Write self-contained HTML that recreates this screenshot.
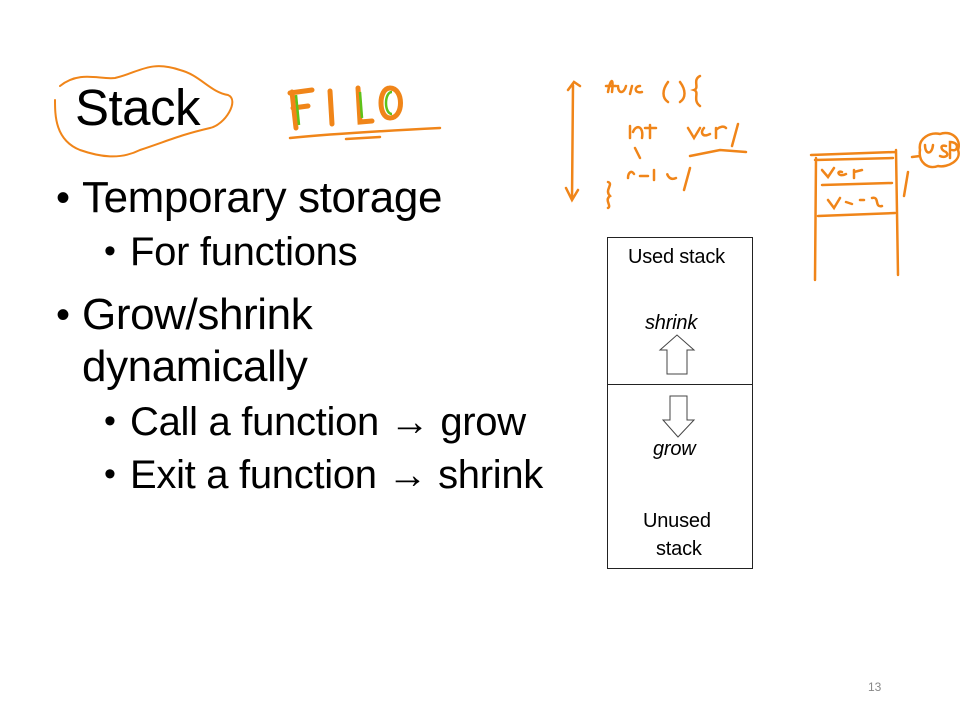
<!DOCTYPE html>
<html><head><meta charset="utf-8"><style>
body{margin:0;width:960px;height:720px;background:#fff;position:relative;overflow:hidden;font-family:"Liberation Sans",sans-serif;color:#000}
.t{position:absolute;white-space:nowrap;line-height:1}
</style></head><body>
<div class="t" style="left:75px;top:82px;font-size:51px;letter-spacing:-0.5px">Stack</div>
<div class="t" style="left:56px;top:178px;font-size:40px">•</div>
<div class="t" style="left:82px;top:176px;font-size:44px;letter-spacing:-0.4px">Temporary storage</div>
<div class="t" style="left:104px;top:234px;font-size:34px">•</div>
<div class="t" style="left:130px;top:232px;font-size:40px;letter-spacing:-0.3px">For functions</div>
<div class="t" style="left:56px;top:295px;font-size:40px">•</div>
<div class="t" style="left:82px;top:293px;font-size:44px;letter-spacing:-0.4px">Grow/shrink</div>
<div class="t" style="left:82px;top:345px;font-size:44px;letter-spacing:-0.4px">dynamically</div>
<div class="t" style="left:104px;top:404px;font-size:34px">•</div>
<div class="t" style="left:130px;top:402px;font-size:40px;letter-spacing:-0.3px">Call a function <b>→</b> grow</div>
<div class="t" style="left:104px;top:457px;font-size:34px">•</div>
<div class="t" style="left:130px;top:455px;font-size:40px;letter-spacing:-0.3px">Exit a function <b>→</b> shrink</div>
<div style="position:absolute;left:607px;top:237px;width:144px;height:330px;border:1.5px solid #222"></div>
<div style="position:absolute;left:607px;top:384px;width:146px;border-top:1.5px solid #222"></div>
<div class="t" style="left:628px;top:247px;font-size:20px;letter-spacing:-0.2px">Used stack</div>
<div class="t" style="left:645px;top:313px;font-size:20px;font-style:italic;letter-spacing:-0.2px">shrink</div>
<div class="t" style="left:653px;top:439px;font-size:20px;font-style:italic;letter-spacing:-0.2px">grow</div>
<div class="t" style="left:643px;top:511px;font-size:20px;letter-spacing:-0.2px">Unused</div>
<div class="t" style="left:656px;top:539px;font-size:20px;letter-spacing:-0.2px">stack</div>
<svg style="position:absolute;left:0;top:0" width="960" height="720">
<path d="M667 374V350H660L677 335L694 350H687V374Z" fill="#fff" stroke="#444" stroke-width="1"/>
<path d="M670 396V420H663L678 437L694 420H687V396Z" fill="#fff" stroke="#444" stroke-width="1"/>
<g fill="none" stroke="#f08519" stroke-width="2" stroke-linecap="round">
<path d="M60 86C80 70 100 80 115 78C140 72 150 60 180 70C200 75 210 92 228 95C240 100 225 125 210 128C180 135 170 140 140 150C120 160 100 157 80 150C55 140 55 115 55 100"/>
</g>
<g fill="none" stroke="#f08519" stroke-width="5" stroke-linecap="round">
<path d="M292 92L296 128M290 93L312 90M293 108L308 106M330 91L332 124M358 88L360 122L372 121M390 88C378 88 378 118 390 118C404 118 404 88 390 88"/>
</g>
<g fill="none" stroke="#5ec21a" stroke-width="2.5">
<path d="M296 95L299 125M360 92L362 118M392 92C384 92 384 114 392 114"/>
</g>
<g fill="none" stroke="#f08519" stroke-width="2.5" stroke-linecap="round">
<path d="M290 138C330 134 400 130 440 128M346 139L380 137"/>
<path d="M573 85L572 200M568 90L574 82L580 86M566 188L572 200L578 190"/>
<path d="M608 92C610 80 614 75 612 92M606 86L616 86M618 86C618 94 624 94 626 86M630 94L632 86M640 86C634 86 634 94 642 92M668 82C662 90 662 98 668 102M680 82C686 90 686 98 680 102M700 76C692 80 700 88 694 90C700 92 692 100 700 106"/>
<path d="M630 126V138M650 125V138M645 128H656M633 132C636 124 644 126 642 138M688 128L694 138L700 128M704 128C700 132 702 138 710 134M716 128V138M716 130C720 126 724 126 726 128M738 124L732 146"/>
<path d="M690 156L720 150L746 152M635 148L640 158"/>
<path d="M628 178C628 172 632 170 634 174M640 176H648M654 170V180M668 176C666 170 668 182 676 178M690 168L684 190M608 182C614 184 604 190 610 196C604 200 612 206 608 208"/>
<path d="M811 155L895 152M816 158L815 280M822 185L892 183M818 216L895 213M896 150L898 275M908 172L904 196M815 160L893 158"/>
<path d="M822 170L828 177L834 168M842 172C836 170 838 178 846 174M854 170V178M854 172L862 170M828 200L834 208L840 198M846 202L852 204M860 200L864 200M872 198C880 196 874 208 882 206"/>
<path d="M920 150C918 138 930 132 940 134C950 130 962 138 958 150C962 160 948 168 938 166C928 170 918 162 920 150M912 157L920 156M925 145C925 155 932 155 933 145M946 146C940 144 940 150 946 152C950 156 944 158 940 156M950 158V142C960 142 958 152 952 150"/>
</g>
</svg>
<div class="t" style="left:868px;top:681px;font-size:12px;color:#888">13</div>
</body></html>
